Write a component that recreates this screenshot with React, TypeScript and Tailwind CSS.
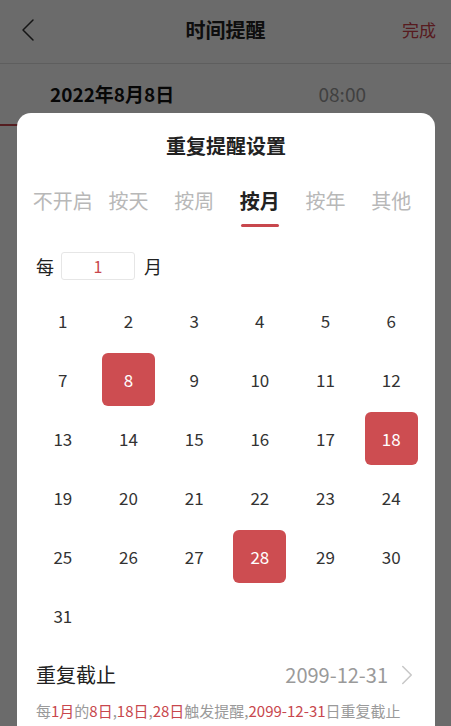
import { ChevronLeft, ChevronRight } from "lucide-react";

const FONT = { fontFamily: '"Noto Sans CJK SC", "Noto Sans", sans-serif' };

const TABS = ["不开启", "按天", "按周", "按月", "按年", "其他"];
const ACTIVE_TAB = "按月";
const SELECTED_DAYS = [8, 18, 28];
const DAYS = Array.from({ length: 31 }, (_, i) => i + 1);

function RepeatSheet() {
  return (
    <div className="absolute left-[17px] top-[113px] h-[640px] w-[418px] rounded-t-[14px] bg-white">
      {/* Title */}
      <div className="flex h-[66px] items-center justify-center text-[20px] font-bold text-[#222]">
        重复提醒设置
      </div>

      {/* Repeat mode tabs */}
      <div className="mx-[13px] grid w-[394px] grid-cols-6 pt-[8px]">
        {TABS.map((tab) => (
          <div key={tab} className="flex flex-col items-center">
            <span
              className={`text-[20px] leading-[28px] ${
                tab === ACTIVE_TAB ? "font-bold text-[#222]" : "text-[#b8b8b8]"
              }`}
            >
              {tab}
            </span>
            <span
              className={`mt-[9px] h-[3px] w-[38px] rounded-full ${
                tab === ACTIVE_TAB ? "bg-[#c8474d]" : "bg-transparent"
              }`}
            />
          </div>
        ))}
      </div>

      {/* Interval */}
      <div className="mt-[25px] flex h-[28px] items-center px-[19px] text-[18px] text-[#222]">
        <span>每</span>
        <div className="ml-[7px] flex h-[28px] w-[74px] items-center justify-center rounded-[3px] border border-[#e6e6e6] text-[16px] text-[#c8474d]">
          1
        </div>
        <span className="ml-[9px]">月</span>
      </div>

      {/* Day of month grid */}
      <div className="mx-[13px] mt-[11px] grid w-[394px] grid-cols-6">
        {DAYS.map((day) => (
          <div key={day} className="flex h-[59px] items-center justify-center">
            {SELECTED_DAYS.includes(day) ? (
              <span className="flex h-[53px] w-[53px] items-center justify-center rounded-[6px] bg-[#cd4d51] text-[17px] text-white">
                {day}
              </span>
            ) : (
              <span className="text-[17px] text-[#333]">{day}</span>
            )}
          </div>
        ))}
      </div>

      {/* End date */}
      <div className="mt-[16px] flex h-[28px] items-center justify-between pl-[19px] pr-[11px]">
        <span className="text-[20px] text-[#222]">重复截止</span>
        <div className="flex items-center">
          <span className="text-[20px] text-[#9a9a9a]">2099-12-31</span>
          <ChevronRight className="ml-[2px] h-[34px] w-[34px] text-[#c8c8c8]" strokeWidth={1.1} />
        </div>
      </div>

      {/* Summary */}
      <p className="mt-[12px] px-[19px] text-[15px] leading-[20px] text-[#9a9a9a]">
        每<span className="text-[#c8474d]">1月</span>的
        <span className="text-[#c8474d]">8日</span>,
        <span className="text-[#c8474d]">18日</span>,
        <span className="text-[#c8474d]">28日</span>触发提醒,
        <span className="text-[#c8474d]">2099-12-31</span>日重复截止
      </p>
    </div>
  );
}

export default function App() {
  return (
    <div className="relative h-[726px] w-[451px] overflow-hidden bg-white" style={FONT}>
      {/* Page header */}
      <div className="relative flex h-[64px] items-center justify-center border-b border-[#e0e0e0] pb-[4px]">
        <ChevronLeft className="absolute left-[8px] top-[10px] h-[40px] w-[40px] text-[#333]" strokeWidth={0.9} />
        <span className="text-[20px] font-bold text-[#222]">时间提醒</span>
        <span className="absolute right-[15px] text-[17px] text-[#d0404a]">完成</span>
      </div>

      {/* Date / time row */}
      <div className="flex h-[60px] items-center pl-[50px] pr-[85px]">
        <span className="text-[19px] font-bold text-[#111]">2022年8月8日</span>
        <span className="ml-auto text-[19px] text-[#999]">08:00</span>
      </div>
      <div className="h-[2px] w-[120px] bg-[#c8474d]" />

      {/* Dim overlay */}
      <div className="absolute inset-0 bg-black/[0.58]" />

      <RepeatSheet />
    </div>
  );
}
